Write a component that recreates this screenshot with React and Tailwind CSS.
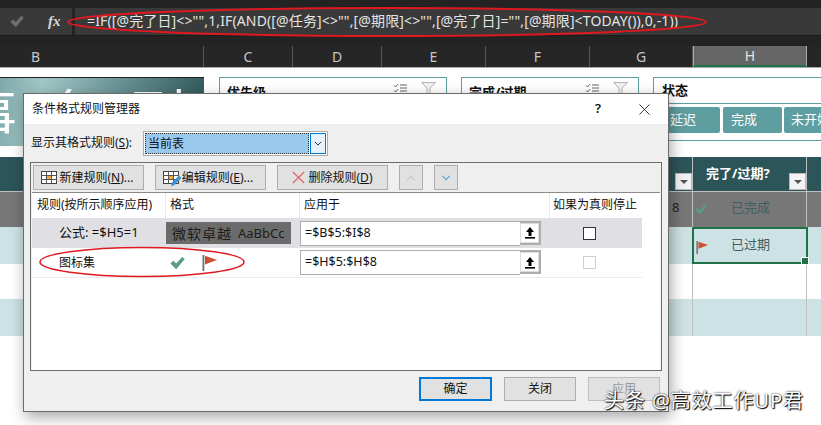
const CJK = `"Noto Sans","Noto Sans CJK SC",sans-serif`;

function Check({ className, color = "#5b9a85" }) {
  return (
    <svg viewBox="0 0 16 14" className={className}>
      <path d="M0.5 7.5 L3.6 4.6 L6.5 7.6 L13 0.5 L15.8 2.8 L6.6 13.6 Z" fill={color} />
    </svg>
  );
}

function Flag({ className }) {
  return (
    <svg viewBox="0 0 16 16" className={className}>
      <rect x="0.5" y="0" width="1.8" height="16" fill="#6f6f6f" />
      <path d="M3 0.8 L15 5 L3 9.5 Z" fill="#c9512f" />
    </svg>
  );
}

function Upload() {
  return (
    <span className="w-[21px] h-[24px] bg-[#dcdcdc] border-[2px] border-[#adadad] border-l-0 flex items-center justify-center shrink-0">
      <span className="w-[17px] h-[18px] bg-white flex items-center justify-center">
        <svg viewBox="0 0 12 13" className="w-[12px] h-[13px]">
          <path d="M6 1 L10 6 L7.5 6 L7.5 10 L4.5 10 L4.5 6 L2 6 Z" fill="#000" />
          <rect x="1" y="11" width="10" height="1.6" fill="#000" />
        </svg>
      </span>
    </span>
  );
}

function GridIcon({ pencil }) {
  return (
    <svg viewBox="0 0 20 18" className="w-[20px] h-[18px] shrink-0">
      <rect x="1.5" y="2.5" width="15" height="12" fill="#fff" stroke="#444" />
      <rect x="6.5" y="6.5" width="5" height="4" fill="#f6a53c" />
      <path d="M1.5 6.5 H16.5 M1.5 10.5 H16.5 M6.5 2.5 V14.5 M11.5 2.5 V14.5" stroke="#555" fill="none" />
      {pencil && <path d="M9 17.5 L10 13.5 L17 6.5 L19.5 9 L12.5 16 Z" fill="#3f8fd0" />}
    </svg>
  );
}

function ToolBtn({ className = "", children }) {
  return (
    <button className={`h-[25px] border-[1px] border-[#adadad] bg-[#e1e1e1] flex items-center justify-center text-[12px] text-[#111] ${className}`}>
      {children}
    </button>
  );
}

function Filter() {
  return (
    <span className="block w-[17px] h-[17px] bg-[#f3f3f6] border border-[#b8b8b8] flex items-center justify-center">
      <span className="w-0 h-0 border-l-[4px] border-r-[4px] border-t-[4px] border-l-transparent border-r-transparent border-t-[#555]" />
    </span>
  );
}

function ColHead({ label, w, active, className = "justify-center" }) {
  return (
    <div
      className={`h-full flex items-center text-[14px] border-r border-[#555] ${className} ${
        active ? "bg-[#666] text-[#e2e2e2] border-b-[2px] border-b-[#1f7246] border-l border-l-[#aaa] border-r-[#aaa]" : "text-[#c6c6c6]"
      } ${w}`}
    >
      {label}
    </div>
  );
}

function Row({ bg, h, children, line = "border-[#c0c0c0]" }) {
  return (
    <div className={`flex ${h} ${bg}`}>
      <div className={`w-[693px] shrink-0 relative border-r ${line}`} />
      <div className={`w-[114px] shrink-0 relative border-r ${line}`}>{children}</div>
      <div className="flex-1" />
    </div>
  );
}

function Slicer({ title, className }) {
  return (
    <div className={`h-[64px] border border-[#5f9ea0] bg-white pl-[7px] pr-[10px] shrink-0 flex items-start justify-between ${className}`}>
      <div className="text-[13px] font-bold text-[#111] leading-[28px]">{title}</div>
      <div className="flex items-center gap-[13px] pt-[4px]">
        <svg viewBox="0 0 15 10" className="w-[15px] h-[10px]">
          <path d="M1 2.5 L2.5 4 L5 1 M1 7.5 L2.5 9 L5 6 M7 2 H14 M7 5 H14 M7 8 H14" stroke="#666" fill="none" />
        </svg>
        <svg viewBox="0 0 15 12" className="w-[15px] h-[12px]">
          <path d="M0.5 0.5 H14.5 L9 6 V11.5 H6 V6 Z" fill="#f2f2f2" stroke="#b5b5b5" />
        </svg>
      </div>
    </div>
  );
}

function RuleRow({ bg, label, labelClass = "text-[12px]", fmt, range, box, border }) {
  return (
    <div className={`w-[610px] h-[30px] flex items-center ${bg} ${border}`}>
      <div className={`w-[134px] pl-[27px] text-[#111] whitespace-nowrap shrink-0 ${labelClass}`}>{label}</div>
      <div className="w-[134px] shrink-0 flex items-center">{fmt}</div>
      <div className="w-[241px] h-[25px] shrink-0 flex">
        <div className="flex-1 bg-white border border-[#adadad] border-r-0 text-[12.5px] text-[#111] pl-[4px] leading-[22px]">{range}</div>
        <Upload />
      </div>
      <div className="flex-1 flex justify-center pr-[5px]">{box}</div>
    </div>
  );
}

export default function App() {
  return (
    <div className="relative w-[821px] h-[425px] overflow-hidden bg-white" style={{ fontFamily: CJK }}>
      {/* formula bar */}
      <div className="h-[46px] bg-[#232323] pt-[8px]">
        <div className="flex h-[28px] gap-[3px] border-b border-[#1a1a1a]">
          <div className="w-[72px] bg-[#393939] flex items-center">
            <Check className="w-[14px] h-[13px] ml-[10px]" color="#6f6f6f" />
            <span className="ml-[24px] text-[#d8d8d8] italic font-bold text-[15px]" style={{ fontFamily: '"Liberation Serif",serif' }}>fx</span>
          </div>
          <div className="flex-1 bg-[#393939] pl-[12px] text-[14px] tracking-[0.13px] leading-[26px] text-[#e4e4e4] whitespace-nowrap">
            =IF([@完了日]&lt;&gt;"",1,IF(AND([@任务]&lt;&gt;"",[@期限]&lt;&gt;"",[@完了日]="",[@期限]&lt;TODAY()),0,-1))
          </div>
        </div>
      </div>

      {/* column headers */}
      <div className="flex h-[22px] bg-[#262626] border-b border-[#a8a8a8]">
        <ColHead label="B" w="w-[204px]" className="pl-[31px]" />
        <ColHead label="C" w="w-[89px]" />
        <ColHead label="D" w="w-[89px]" />
        <ColHead label="E" w="w-[104px]" />
        <ColHead label="F" w="w-[104px]" />
        <ColHead label="G" w="w-[103px]" />
        <ColHead label="H" w="w-[114px]" active />
        <div className="flex-1" />
      </div>

      {/* slicers and banner */}
      <div className="h-[89px] flex pt-[9px] items-start">
        <div className="w-[204px] h-[69px] border-t border-[#222] shrink-0 overflow-hidden text-white text-[54px] leading-[72px] whitespace-nowrap bg-[linear-gradient(100deg,#7ea8a8_0%,#a3c6c6_20%,#6b9496_55%,#2d5557_100%)]">
          <span className="ml-[-37px] tracking-[30px]">事务列表</span>
        </div>
        <Slicer title="优先级" className="ml-[15px] w-[228px]" />
        <Slicer title="完成/过期" className="ml-[14px] w-[178px]" />
        <div className="ml-[14px] h-[64px] flex-1 border border-r-0 border-[#5f9ea0] bg-white">
          <div className="h-[26px] border-b border-[#5f9ea0] text-[13px] font-bold text-[#111] pl-[8px] leading-[24px]">状态</div>
          <div className="flex gap-[2px] pt-[3px]">
            {["延迟", "完成", "未开始"].map((t, i) => (
              <div key={t} className={`h-[26px] bg-[#5f9ea0] rounded-[2px] text-white text-[13px] leading-[25px] shrink-0 whitespace-nowrap ${i === 0 ? "w-[66px] pl-[16px]" : i === 1 ? "w-[59px] pl-[8px] ml-px" : "w-[60px] pl-[7px]"}`}>{t}</div>
            ))}
          </div>
        </div>
      </div>

      {/* table */}
      <div className="flex h-[34px] bg-[#2c5559] text-white font-bold text-[13px]">
        <div className="w-[693px] border-r border-[#c0c0c0] relative shrink-0">
          <span className="absolute right-0 top-[16px]"><Filter /></span>
        </div>
        <div className="w-[114px] border-r border-[#c0c0c0] relative pt-[7px] pl-[13px] shrink-0 whitespace-nowrap">
          完了/过期?
          <span className="absolute right-0 top-[16px]"><Filter /></span>
        </div>
      </div>
      <div className="h-px bg-[#c0c0c0]" />
      <Row bg="bg-[#777]" h="h-[35px]">
        <span className="absolute left-[-21px] top-[6px] text-[13px] text-[#222]">8</span>
        <Check className="absolute left-[2px] top-[12px] w-[12px] h-[11px]" />
        <span className="absolute left-[38px] top-[6px] text-[13px] text-[#3f5f62]">已完成</span>
      </Row>
      <div className="h-[37px] bg-[#cde2e4] flex">
        <div className="w-[692px] shrink-0" />
        <div className="w-[116px] h-[37px] border-[2px] border-[#1f7246] relative shrink-0 z-10">
          <Flag className="absolute left-[2px] top-[12px] w-[13px] h-[13px]" />
          <span className="absolute left-[37px] top-[6px] text-[13px] text-[#3f5f62]">已过期</span>
          <span className="absolute right-[-3px] bottom-[-3px] w-[6px] h-[6px] bg-[#1f7246] border border-white box-content" />
        </div>
      </div>
      <Row bg="bg-white" h="h-[35px]" />
      <Row bg="bg-[#cde2e4]" h="h-[37px]" />
      <Row bg="bg-white" h="h-[89px]" line="border-transparent" />

      {/* dialog */}
      <div className="absolute left-[23px] top-[93px] w-[646px] h-[319px] bg-[#efefef] border border-[#6b6b6b] shadow-[2px_5px_14px_rgba(0,0,0,0.35)] flex flex-col">
        <div className="h-[30px] bg-white flex items-center pl-[8px] text-[12px] text-[#111] shrink-0">
          <span className="flex-1">条件格式规则管理器</span>
          <span className="mr-[38px] text-[13px] font-semibold">?</span>
          <svg viewBox="0 0 12 12" className="w-[11px] h-[11px] mr-[18px]">
            <path d="M0.5 0.5 L11.5 11.5 M11.5 0.5 L0.5 11.5" stroke="#222" strokeWidth="1" />
          </svg>
        </div>

        <div className="h-[38px] flex items-center pl-[7px] shrink-0">
          <span className="w-[112px] text-[12px] text-[#111] whitespace-nowrap">
            显示其格式规则(<span className="underline">S</span>):
          </span>
          <div className="w-[185px] h-[25px] bg-white border border-[#adadad] flex items-center p-[1px] gap-[1px]">
            <div className="flex-1 h-full bg-[#9ac9ee] border border-dotted border-[#333] text-[12px] leading-[19px] pl-[2px] text-[#111]">当前表</div>
            <div className="w-[16px] h-full bg-[#e5f1fb] border border-[#0078d7] flex items-center justify-center">
              <svg viewBox="0 0 10 6" className="w-[8px] h-[5px]">
                <path d="M1 1 L5 5 L9 1" stroke="#222" strokeWidth="1.2" fill="none" />
              </svg>
            </div>
          </div>
        </div>

        <div className="mx-[6px] w-[632px] h-[209px] border border-[#6d6d6d] flex flex-col shrink-0">
          <div className="h-[29px] flex items-center pl-[2px] shrink-0">
            <ToolBtn className="w-[111px] pr-[4px]">
              <GridIcon />
              <span>新建规则(<span className="underline">N</span>)...</span>
            </ToolBtn>
            <ToolBtn className="w-[111px] ml-[11px] pr-[6px]">
              <GridIcon pencil />
              <span>编辑规则(<span className="underline">E</span>)...</span>
            </ToolBtn>
            <ToolBtn className="w-[111px] gap-[4px] ml-[11px] pr-[1px]">
              <svg viewBox="0 0 14 14" className="w-[13px] h-[13px] shrink-0">
                <path d="M1 1 L13 13 M13 1 L1 13" stroke="#e8646a" strokeWidth="1.4" />
              </svg>
              <span>删除规则(<span className="underline">D</span>)</span>
            </ToolBtn>
            <ToolBtn className="w-[24px] ml-[11px]">
              <svg viewBox="0 0 12 8" className="w-[10px] h-[6px]"><path d="M1 7 L6 2 L11 7" stroke="#bdbdbd" strokeWidth="1.4" fill="none" /></svg>
            </ToolBtn>
            <ToolBtn className="w-[24px] ml-[11px]">
              <svg viewBox="0 0 12 8" className="w-[10px] h-[6px]"><path d="M1 1 L6 6 L11 1" stroke="#3f94d6" strokeWidth="1.4" fill="none" /></svg>
            </ToolBtn>
          </div>
          <div className="flex-1 bg-white border-t border-[#8a8a8a] ml-[1px] mr-px flex flex-col">
            <div className="h-[25px] flex text-[12px] text-[#111] w-[610px] shrink-0 items-center">
              <div className="w-[134px] pl-[5px] whitespace-nowrap border-r border-[#e8e8e8] h-full leading-[24px]">规则(按所示顺序应用)</div>
              <div className="w-[134px] pl-[4px] border-r border-[#e8e8e8] h-full leading-[24px]">格式</div>
              <div className="w-[250px] pl-[4px] border-r border-[#e8e8e8] h-full leading-[24px]">应用于</div>
              <div className="flex-1 pl-[3px] whitespace-nowrap h-full leading-[24px]">如果为真则停止</div>
            </div>
            <RuleRow
              bg="bg-[#e0e0e4]"
              label="公式: =$H5=1"
              labelClass="text-[13px]"
              range="=$B$5:$I$8"
              fmt={
                <div className="w-[125px] h-[22px] bg-[#6b6b6b] text-[#1c1c1c] text-[14px] leading-[21px] pl-[6px] whitespace-nowrap flex items-center">
                  <span className="tracking-[1px]">微软卓越</span><span className="text-[13px] ml-[6px]">AaBbCc</span>
                </div>
              }
              box={<span className="block w-[13px] h-[13px] bg-white border border-[#333]" />}
            />
            <RuleRow
              bg="bg-white"
              border="border-b border-[#ececec]"
              label="图标集"
              range="=$H$5:$H$8"
              fmt={
                <div className="flex items-center pl-[4px] gap-[17px]">
                  <Check className="w-[15px] h-[14px]" />
                  <Flag className="w-[16px] h-[16px]" />
                </div>
              }
              box={<span className="block w-[13px] h-[13px] bg-white border border-[#cfcfcf]" />}
            />
          </div>
        </div>

        <div className="flex justify-end gap-[12px] pr-[8px] pt-[6px] text-[12px] text-[#111]">
          <button className="w-[73px] h-[24px] bg-[#e1e1e1] border-[2px] border-[#0078d7] leading-[18px]">确定</button>
          <button className="w-[72px] h-[24px] bg-[#e1e1e1] border border-[#adadad] leading-[20px]">关闭</button>
          <button className="w-[72px] h-[24px] bg-[#e1e1e1] border border-[#bfbfbf] text-[#9a9a9a] leading-[20px]">应用</button>
        </div>
      </div>

      {/* red annotation ellipses */}
      <svg className="absolute left-0 top-0 pointer-events-none" width="821" height="425">
        <ellipse cx="387" cy="22" rx="319" ry="14" fill="none" stroke="#e0181f" strokeWidth="2" />
        <ellipse cx="142" cy="262" rx="102" ry="14.5" fill="none" stroke="#e0181f" strokeWidth="1.5" />
      </svg>

      {/* watermark */}
      <div className="absolute left-[604px] top-[389px] text-white text-[20px] tracking-[0.9px] leading-[24px] whitespace-nowrap [text-shadow:0_0_2px_#000,1px_1px_1px_#000]">
        头条 @高效工作UP君
      </div>
    </div>
  );
}
